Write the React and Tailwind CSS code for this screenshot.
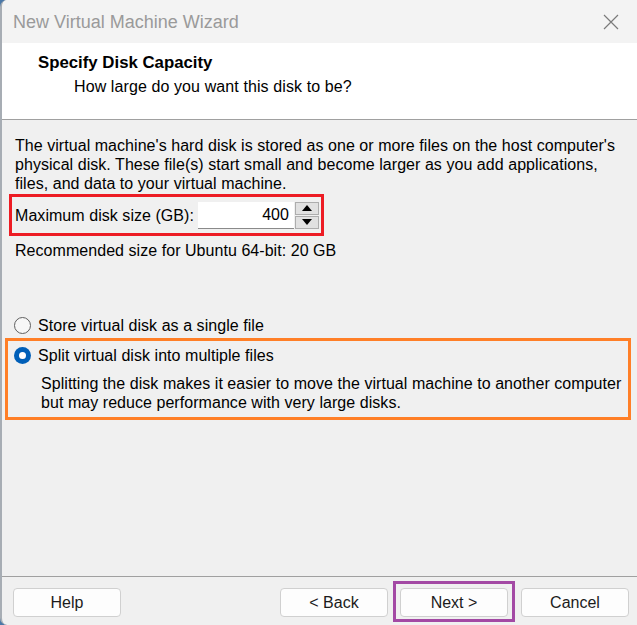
import React from 'react';

const font = { fontFamily: '"Liberation Sans", Arial, sans-serif' };

const Radio = ({ checked }) =>
  checked ? (
    <span className="w-[17px] h-[17px] rounded-full bg-[#005fb8] flex items-center justify-center shrink-0">
      <span className="w-[7px] h-[7px] rounded-full bg-white" />
    </span>
  ) : (
    <span className="w-[17px] h-[17px] rounded-full border border-[#5f5f5f] bg-[#f7f7f7] shrink-0" />
  );

const Button = ({ children }) => (
  <button className="w-[108px] h-[29px] bg-[#fdfdfd] border border-[#d0d0d0] rounded-[4px] text-[16px] text-[#1b1b1b] flex items-center justify-center">
    {children}
  </button>
);

const App = () => {
  return (
    <div className="w-[637px] h-[625px] bg-[#4a78a8] overflow-hidden" style={font}>
      <div className="w-[637px] h-[625px] flex flex-col bg-[#f0f0f0] border-l-2 border-[#a7adb4] rounded-tl-[7px] rounded-bl-[7px] overflow-hidden">
        {/* title bar */}
        <div className="h-[43px] shrink-0 bg-[#f3f3f3] flex items-center justify-between pl-[11px] pr-[18px]">
          <span className="text-[18px] text-[#9a9a9a] leading-none">New Virtual Machine Wizard</span>
          <svg width="16" height="16" viewBox="0 0 16 16" className="mt-[1px]">
            <path d="M1 1 L15 15 M15 1 L1 15" stroke="#7a7a7a" strokeWidth="1.2" fill="none" />
          </svg>
        </div>

        {/* header */}
        <div className="h-[77px] shrink-0 bg-white border-b border-[#a0a0a0] pl-[36px] pt-[10px]">
          <div className="text-[16.8px] leading-[20px] font-bold text-black">Specify Disk Capacity</div>
          <div className="text-[16px] leading-[20px] text-black mt-[4px] pl-[36px] tracking-[0.1px]">How large do you want this disk to be?</div>
        </div>

        {/* body */}
        <div className="pt-[16px] text-[16px] leading-[19px] text-black tracking-[0.05px]">
          <p className="pl-[13px] pr-[6px] whitespace-nowrap">
            The virtual machine's hard disk is stored as one or more files on the host computer's
            <br />
            physical disk. These file(s) start small and become larger as you add applications,
            <br />
            files, and data to your virtual machine.
          </p>

          <div className="ml-[7px] mt-[1px] w-[315px] h-[42px] border-[3px] border-[#ed1c24] flex items-center pl-[3px] pr-[2px]">
            <span>Maximum disk size (GB):</span>
            <div className="ml-auto flex items-center">
              <div className="w-[96px] h-[27px] bg-white border-b border-[#8a8a8a] flex items-center justify-end pr-[5px]">400</div>
              <div className="ml-[1px] w-[24px] h-[27px] flex flex-col gap-[1px]">
                <div className="flex-1 bg-[#e1e1e1] border border-[#adadad] flex items-center justify-center">
                  <svg width="10" height="6" viewBox="0 0 10 6"><path d="M5 0 L10 6 L0 6 Z" fill="#000" /></svg>
                </div>
                <div className="flex-1 bg-[#e1e1e1] border border-[#adadad] flex items-center justify-center">
                  <svg width="10" height="6" viewBox="0 0 10 6"><path d="M0 0 L10 0 L5 6 Z" fill="#000" /></svg>
                </div>
              </div>
            </div>
          </div>

          <div className="pl-[13px] mt-[5px]">Recommended size for Ubuntu 64-bit: 20 GB</div>

          <div className="mt-[55px] h-[20px] flex items-center pl-[12px] gap-[7px]">
            <Radio />
            <span>Store virtual disk as a single file</span>
          </div>

          <div className="ml-[3px] mt-[3px] w-[626px] border-[3px] border-[#ff7f27] pt-[4px] pb-[5px]">
            <div className="h-[20px] flex items-center pl-[6px] gap-[7px]">
              <Radio checked />
              <span>Split virtual disk into multiple files</span>
            </div>
            <p className="pl-[33px] mt-[9px] whitespace-nowrap">
              Splitting the disk makes it easier to move the virtual machine to another computer
              <br />
              but may reduce performance with very large disks.
            </p>
          </div>
        </div>

        <div className="flex-1" />

        {/* footer */}
        <div className="h-[49px] shrink-0 border-t border-[#a0a0a0] flex items-start pl-[11px] pr-[8px]">
          <div className="mt-[11px]"><Button>Help</Button></div>
          <div className="flex-1" />
          <div className="mt-[11px]"><Button>&lt; Back</Button></div>
          <div className="ml-[5px] mt-[4px] border-[3px] border-[#a349a4] pt-[4px] pb-[2px] px-[4px]">
            <Button>Next &gt;</Button>
          </div>
          <div className="ml-[6px] mt-[11px]"><Button>Cancel</Button></div>
        </div>
      </div>
    </div>
  );
};

export default App;
